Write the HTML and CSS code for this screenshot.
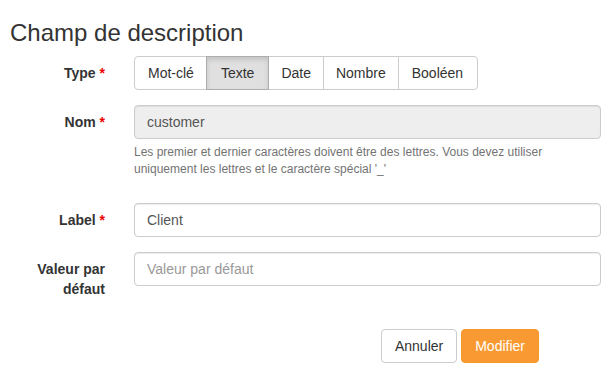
FILE: index.html
```html
<!DOCTYPE html>
<html lang="fr">
<head>
<meta charset="utf-8">
<link rel="stylesheet" href="styles.css">
</head>
<body>
<div class="panel">
  <h3 class="title">Champ de description</h3>
  <form class="form">
    <div class="row">
      <label class="label">Type <span class="req">*</span></label>
      <div class="field">
        <div class="btn-group">
          <button type="button" class="seg">Mot-clé</button>
          <button type="button" class="seg active">Texte</button>
          <button type="button" class="seg">Date</button>
          <button type="button" class="seg">Nombre</button>
          <button type="button" class="seg">Booléen</button>
        </div>
      </div>
    </div>
    <div class="row">
      <label class="label">Nom <span class="req">*</span></label>
      <div class="field">
        <input class="input" type="text" value="customer" readonly disabled>
        <p class="help">Les premier et dernier caractères doivent être des lettres. Vous devez utiliser uniquement les lettres et le caractère spécial '_'</p>
      </div>
    </div>
    <div class="row">
      <label class="label">Label <span class="req">*</span></label>
      <div class="field">
        <input class="input" type="text" value="Client">
      </div>
    </div>
    <div class="row">
      <label class="label">Valeur par défaut</label>
      <div class="field">
        <input class="input" type="text" placeholder="Valeur par défaut">
      </div>
    </div>
    <div class="footer">
      <button type="button" class="btn btn-default">Annuler</button>
      <button type="button" class="btn btn-primary">Modifier</button>
    </div>
  </form>
</div>
</body>
</html>
```
FILE: styles.css
```css
* { box-sizing: border-box; }
html, body { margin: 0; padding: 0; background: #fff; }
body {
  font-family: "Liberation Sans", Arial, Helvetica, sans-serif;
  font-size: 14px;
  line-height: 20px;
  color: #333;
}
.panel { padding: 0; }
.title {
  margin: 0;
  padding: 20px 0 0 10px;
  font-size: 24px;
  font-weight: 400;
  line-height: 26px;
  color: #333;
}
.form { margin-top: 10px; padding-right: 11px; }
.row {
  display: grid;
  grid-template-columns: 119px 1fr;
  column-gap: 15px;
  margin-bottom: 15px;
}
.label {
  text-align: right;
  padding: 7px 14px 0 0;
  font-weight: 700;
  line-height: 20px;
}
.req { color: #e00; }
.field { min-width: 0; }
.btn-group { display: flex; }
.seg {
  font-family: inherit;
  font-size: 14px;
  line-height: 20px;
  color: #333;
  background: #fff;
  border: 1px solid #ccc;
  padding: 6px 12px;
  margin: 0 0 0 -1px;
  height: 34px;
  cursor: pointer;
}
.seg:first-child { margin-left: 0; border-radius: 4px 0 0 4px; padding-left: 13px; }
.seg.active { padding: 6px 14px; }
.seg:last-child { border-radius: 0 4px 4px 0; padding: 6px 14px 6px 13px; }
.seg.active {
  background: #e0e0e0;
  border-color: #adadad;
  box-shadow: inset 0 3px 5px rgba(0,0,0,0.125);
  position: relative;
}
.input {
  display: block;
  width: 100%;
  height: 34px;
  padding: 6px 12px;
  font-family: inherit;
  font-size: 14px;
  line-height: 20px;
  color: #555;
  background: #fff;
  border: 1px solid #ccc;
  border-radius: 4px;
  box-shadow: inset 0 1px 1px rgba(0,0,0,0.075);
}
.input:disabled { background: #eee; color: #555; opacity: 1; }
.input::placeholder { color: #999; }
.help {
  margin: 5px 0 10px;
  font-size: 12px;
  line-height: 17px;
  color: #737373;
}
.footer {
  display: flex;
  justify-content: flex-end;
  gap: 4px;
  padding-right: 62px;
  margin-top: 30px;
}
.btn {
  font-family: inherit;
  font-size: 14px;
  line-height: 20px;
  padding: 6px 13px;
  height: 34px;
  border: 1px solid #ccc;
  border-radius: 4px;
  cursor: pointer;
}
.btn-default { background: #fff; color: #333; }
.btn-primary { background: #f89a31; border-color: #f8962a; color: #fff; }
```
